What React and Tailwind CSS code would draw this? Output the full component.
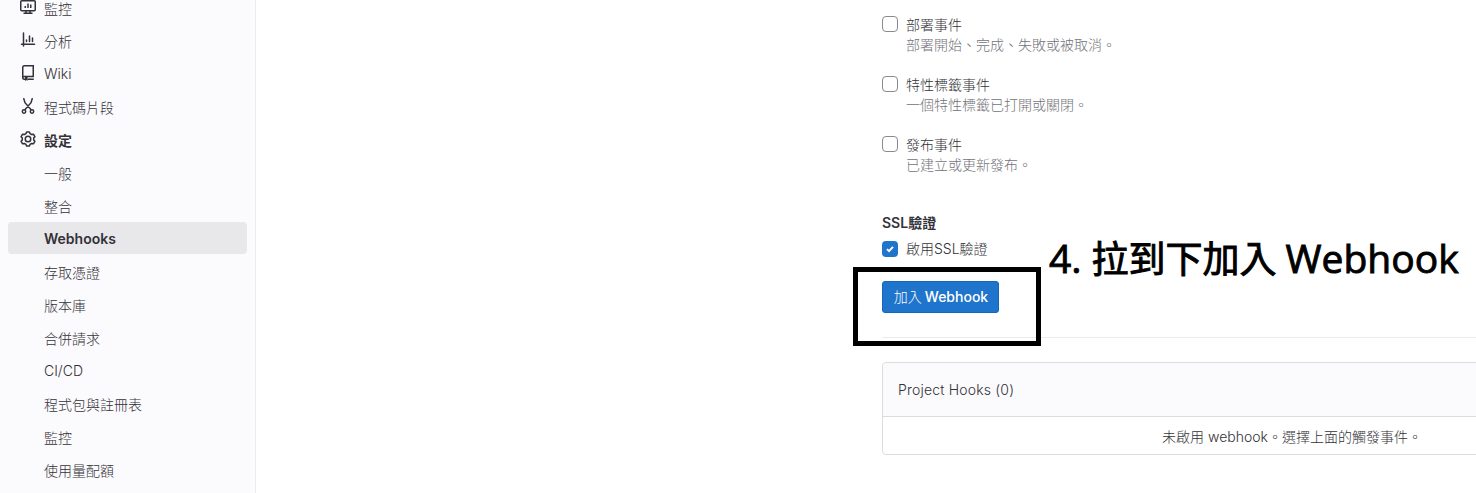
import React from "react";

const stroke = { fill: "none", stroke: "currentColor", strokeWidth: 1.5 };

function Icon({ children }) {
  return (
    <svg viewBox="0 0 16 16" className="size-4 shrink-0 text-[#333238]">
      {children}
    </svg>
  );
}

const MonitorIcon = () => (
  <Icon>
    <g {...stroke}>
      <rect x="0.75" y="1.75" width="14.5" height="10" rx="1" />
      <path d="M5.25 9V7M8 9V4.500M10.75 9V5.5M6 12v2M10 12v2M3.5 14.25h9" />
    </g>
  </Icon>
);

const ChartIcon = () => (
  <Icon>
    <path {...stroke} d="M3.500 1v13M1.500 12.25h13M6.500 9.500V8M9.500 9.500V4M12.500 9.500V6" strokeLinecap="round" />
  </Icon>
);

const BookIcon = () => (
  <Icon>
    <path
      {...stroke}
      d="M5.500 14.250H4.250A1.500 1.500 0 0 1 2.750 12.750V2.500A1.75 1.75 0 0 1 4.500 0.750h8.750v10.750H4.250A1.400 1.400 0 0 0 2.750 12.750M7.500 14.250h6.250"
    />
    <path d="M5 12h2.500v4l-1.250-0.900L5 16z" fill="currentColor" />
  </Icon>
);

const ScissorsIcon = () => (
  <Icon>
    <g {...stroke} strokeLinecap="round">
      <circle cx="4" cy="13.500" r="1.700" />
      <circle cx="12" cy="13.500" r="1.700" />
      <path d="M3.800 0.750l1.200 4L10.900 11.500M12.200 0.750l-1.200 4L5.100 11.500" />
    </g>
  </Icon>
);

const GearIcon = () => (
  <Icon>
    <g {...stroke} strokeLinejoin="round">
      <circle cx="8" cy="8" r="2.750" />
      <path d="M6.600 0.900h2.800l0.600 1.700 1.600 0.900 1.800-0.350 1.500 2.500L13.700 7.100v1.800l1.200 1.450-1.500 2.500-1.800-0.350-1.600 0.900-0.600 1.700H6.600l-0.600-1.700-1.600-0.900-1.800 0.350-1.500-2.500L2.300 8.900V7.100L1.100 5.650l1.500-2.500 1.800 0.350 1.600-0.900z" />
    </g>
  </Icon>
);

const NAV = [
  { label: "監控", icon: MonitorIcon },
  { label: "分析", icon: ChartIcon },
  { label: "Wiki", icon: BookIcon },
  { label: "程式碼片段", icon: ScissorsIcon },
  { label: "設定", icon: GearIcon, bold: true },
  { label: "一般" },
  { label: "整合" },
  { label: "Webhooks", bold: true, active: true },
  { label: "存取憑證" },
  { label: "版本庫" },
  { label: "合併請求" },
  { label: "CI/CD" },
  { label: "程式包與註冊表" },
  { label: "監控" },
  { label: "使用量配額" },
];

const EVENTS = [
  ["部署事件", "部署開始、完成、失敗或被取消。"],
  ["特性標籤事件", "一個特性標籤已打開或關閉。"],
  ["發布事件", "已建立或更新發布。"],
];

function Sidebar() {
  return (
    <nav className="h-full w-64 shrink-0 overflow-hidden border-r border-[#ececef] bg-[#fbfafd] px-2">
      <ul className="-mt-[9px] flex flex-col gap-px">
        {NAV.map(({ label, icon: Glyph, bold, active }, i) => (
          <li
            key={i}
            className={`flex h-8 shrink-0 items-center gap-2 rounded pl-3 ${bold ? "font-semibold" : "font-light"} ${
              active ? "bg-[#e8e7ea]" : ""
            }`}
          >
            {Glyph ? <Glyph /> : <span className="w-4" />}
            <span className={/^[A-Z]/.test(label) ? (bold ? "pt-0.5" : "pt-0.5 font-[350]") : "pt-[3px]"}>{label}</span>
          </li>
        ))}
      </ul>
    </nav>
  );
}

function Checkbox({ checked }) {
  return checked ? (
    <span className="flex size-4 shrink-0 items-center justify-center rounded bg-[#1f75cb]">
      <svg viewBox="0 0 8 8" className="size-2">
        <path d="M1 4.200l2 2L7 1.800" fill="none" stroke="#fff" strokeWidth="1.900" />
      </svg>
    </span>
  ) : (
    <span className="size-4 shrink-0 rounded border border-[#89888d] bg-white" />
  );
}

export default function App() {
  return (
    <div className="relative flex h-[493px] w-full overflow-hidden bg-white font-['Inter','Noto_Sans_CJK_TC',sans-serif] text-sm leading-5 text-[#333238]">
      <Sidebar />
      <main className="min-w-0 flex-1 overflow-hidden pt-4 pl-[626px]">
        <div className="flex flex-col gap-5">
          {EVENTS.map(([title, help]) => (
            <div key={title} className="flex h-10 gap-2 font-light">
              <Checkbox />
              <div className="-mt-px whitespace-nowrap">
                <div>{title}</div>
                <div className="text-[#737278]">{help}</div>
              </div>
            </div>
          ))}
        </div>
        <div className="mt-[37px] font-semibold">SSL驗證</div>
        <div className="mt-2 flex h-4 gap-2 font-light">
          <Checkbox checked />
          <span className="-mt-0.5">啟用SSL驗證</span>
        </div>
        <button className="mt-6 flex h-8 w-[117px] items-center justify-center gap-[3px] rounded-[3px] border border-[#1068bf] bg-[#1f75cb] pl-px font-medium whitespace-nowrap text-white">
          <span className="font-light">加入</span>
          <span>Webhook</span>
        </button>
        <hr className="mt-6 border-[#ececef]" />
        <section className="mt-6 w-[820px] rounded border border-[#dcdcde]">
          <div className="flex h-[54px] items-center rounded-t border-b border-[#dcdcde] bg-[#fbfafd] px-[15px] pt-px font-[350] tracking-[0.18px]">
            Project Hooks (0)
          </div>
          <div className="flex h-[37px] items-center justify-center pt-0.5 font-light">
            <span className="whitespace-pre">
              未啟用 <span className="font-[350]">webhook</span>。選擇上面的觸發事件。
            </span>
          </div>
        </section>
      </main>
      <div className="absolute top-[267px] left-[853px] h-[79px] w-[188px] border-[5px] border-black" />
      <div className="absolute top-[233px] left-[1049px] flex h-[50px] items-baseline font-['Open_Sans','Noto_Sans_CJK_TC',sans-serif] text-[39px] leading-[50px] whitespace-pre text-black [-webkit-text-stroke:0.9px_black]">
        <span>4.</span>
        <span className="ml-[10px] text-[37px]">拉到下加入</span>
        <span className="ml-[9px]">Webhook</span>
      </div>
    </div>
  );
}
